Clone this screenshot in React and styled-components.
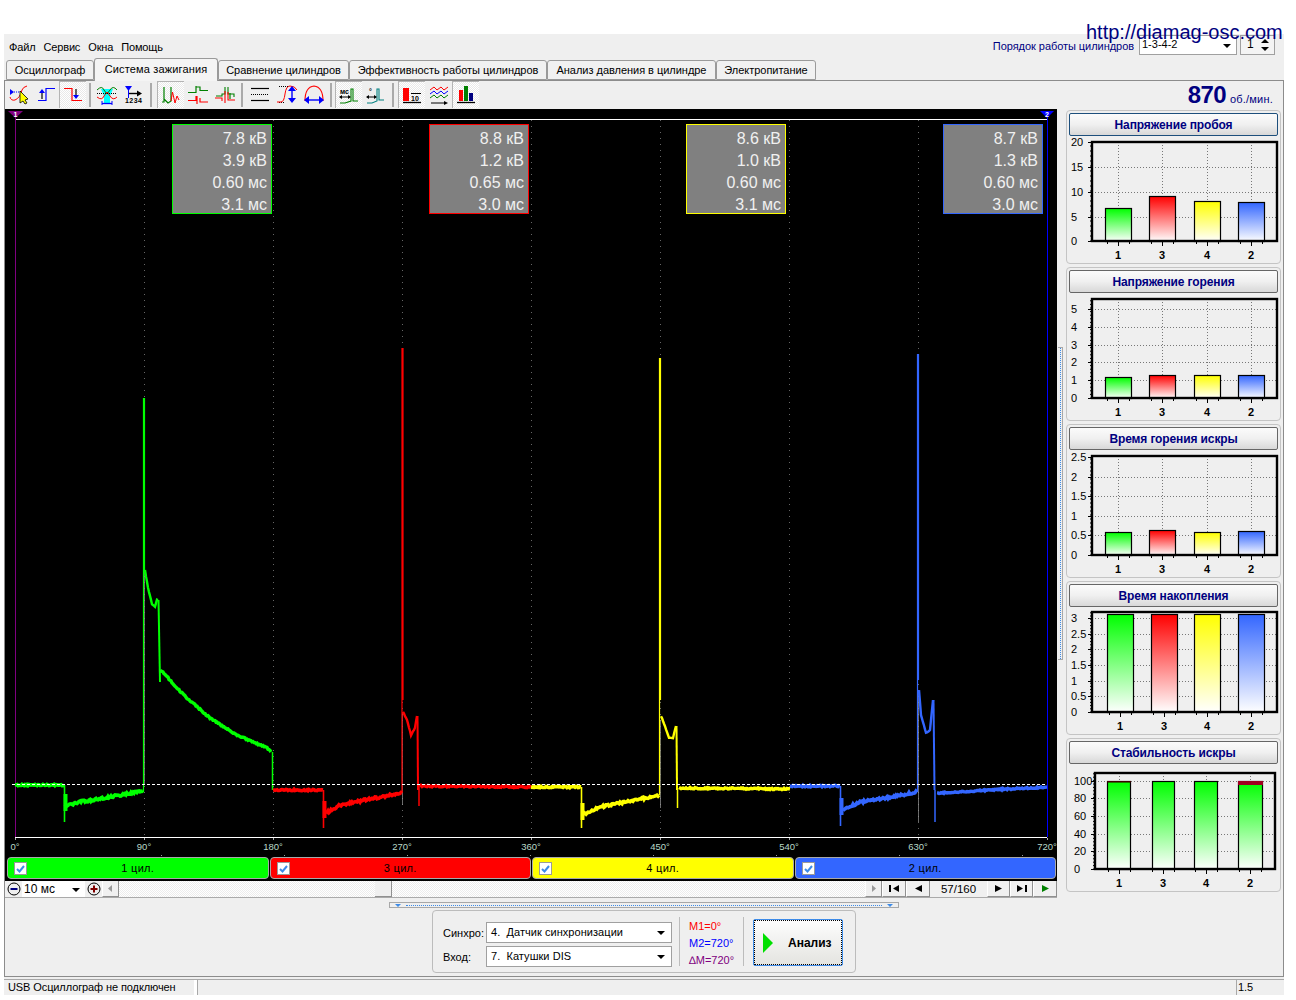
import React from 'react';
import styled, { createGlobalStyle } from 'styled-components';

const UI = '"Liberation Sans", Arial, sans-serif';

const Global = createGlobalStyle`
  html, body { margin: 0; padding: 0; background: #fff; }
  body { font-family: ${UI}; font-size: 11px; color: #000; }
`;

const Page = styled.div`
  position: relative; width: 1296px; height: 1000px; padding: 34px 0 0 4px; box-sizing: border-box; overflow: hidden;
`;
const Url = styled.div`
  position: absolute; z-index: 5; left: 1086px; top: 20px; font: 20px/24px ${UI}; color: #00007f; white-space: nowrap;
`;
const Window = styled.div`
  width: 1280px; height: 961px; background: #efefef; display: flex; flex-direction: column;
`;
const MenuRow = styled.div`
  height: 24px; display: flex; justify-content: space-between; padding: 1px 9px 0 5px; box-sizing: border-box;
`;
const Menu = styled.div`
  display: flex; gap: 8px; padding-top: 6px; line-height: 13px; letter-spacing: -.15px;
`;
const Order = styled.div`
  display: flex; align-items: flex-start;
`;
const OrderLabel = styled.span`
  color: #000080; margin: 5px 5px 0 0; line-height: 13px; letter-spacing: -.05px;
`;
const Combo = styled.div`
  position: relative; box-sizing: border-box; width: ${p => p.$w}px; height: ${p => p.$h}px;
  background: ${p => p.$bg || '#fff'}; border: ${p => p.$flat ? 0 : '1px solid #a0a0a0'}; padding: ${p => p.$pad || '0 0 0 3px'};
  line-height: ${p => p.$lh || 13}px; font-size: ${p => p.$fs || 11}px; letter-spacing: ${p => p.$ls || 0}px; white-space: pre;
  margin-left: ${p => p.$ml || 0}px; flex: none;
`;
const Caret = styled.i`
  position: absolute; right: ${p => p.$r}px; top: ${p => p.$t}px; width: 0; height: 0;
  border: 4px solid transparent; border-bottom: 0; border-top: 4px solid #000;
`;
const CaretUp = styled(Caret)`
  border-top: 0; border-bottom: 4px solid #000;
`;
const Tabs = styled.div`
  height: 22px; display: flex; align-items: flex-end; padding-left: 2px; position: relative; z-index: 1;
`;
const Tab = styled.div`
  box-sizing: border-box; height: ${p => p.$on ? 23 : 20}px; width: ${p => p.$w}px; margin-bottom: ${p => p.$on ? -1 : 0}px;
  border: 1px solid #9a9a9a; border-bottom: ${p => p.$on ? 0 : '1px solid #9a9a9a'}; border-radius: 3px 3px 0 0;
  background: ${p => p.$on ? '#f4f4f4' : '#f1f1f1'}; text-align: center; line-height: ${p => p.$on ? 20 : 19}px; letter-spacing: ${p => p.$on ? .15 : -.03}px; white-space: nowrap;
`;
const Frame = styled.div`
  flex: none; height: 897px; box-sizing: border-box; border: 1px solid #8c8c8c; display: flex; flex-direction: column;
`;
const Toolbar = styled.div`
  height: 28px; display: flex; align-items: stretch; position: relative;
`;
const ToolBtn = styled.div`
  width: 27px; height: 27px; display: flex; align-items: center; justify-content: center; flex: none; box-sizing: border-box;
  ${p => p.$on && `
    border-left: 1px solid #b4b4b4; border-top: 1px solid #b4b4b4; 
    background: conic-gradient(#fff 25%, #e9e9e9 0 50%, #fff 0 75%, #e9e9e9 0) 0 0 / 2px 2px;
  `}
`;
const Sep = styled.div`
  width: 2px; height: 24px; margin: 2px ${p => p.$r}px 0 3px; background: #aaa; flex: none;
`;
const Rpm = styled.div`
  margin-left: auto; padding: 0 10px 0 0; display: flex; align-items: baseline; line-height: 28px; color: #000080;
`;
const RpmValue = styled.b`
  font-size: 24px; letter-spacing: -.6px; margin-right: 4px;
`;
const RpmUnit = styled.span`
  font-size: 11px; letter-spacing: .2px;
`;
const Body = styled.div`
  display: flex; align-items: flex-start;
`;
const ScopeColumn = styled.div`
  width: 1052px; flex: none;
`;
const VSplit = styled.div`
  width: 5px; height: 313px; margin: 238px 0 0 1px; flex: none; box-sizing: border-box; border-right: 1px solid #a8a8a8; border-top: 1px solid #a8a8a8; border-bottom: 1px solid #a8a8a8;
  display: flex; justify-content: center;
`;
const VDots = styled.i`
  border-left: 1px dotted #3d8be8;
`;
const Canvas = styled.div`
  position: relative; height: 748px; background: #000;
`;
const Plot = styled.svg`
  display: block; font-family: ${UI};
`;
const ValueBox = styled.div`
  position: absolute; left: ${p => p.$x - 5}px; top: 15px; width: 100px; height: 90px; box-sizing: border-box;
  background: #808080; border: 1px solid ${p => p.$c}; color: #f0f0f0; font-size: 16px; line-height: 22px; text-align: right; padding: 3px 4px 0 0;
`;
const ColorRow = styled.div`
  height: 24px; background: #000; display: flex; gap: 1px; padding: 0 1px 0 2px; box-sizing: border-box;
`;
const ColorBtn = styled.div`
  flex: 1; height: 22px; box-sizing: border-box; background: ${p => p.$c}; border-radius: 4px; border: 1px solid #a8a8a8;
  display: flex; align-items: center; position: relative; justify-content: center; font-size: 11px; letter-spacing: .3px;
`;
const Check = styled.i`
  position: absolute; left: 6px; top: 4px; width: 13px; height: 13px; box-sizing: border-box; background: #fff; border: 1px solid #9a9a9a;
  display: flex; align-items: center; justify-content: center;
`;
const Controls = styled.div`
  height: 17px; box-sizing: border-box; border-bottom: 1px solid #aaa; display: flex; padding-left: 1px;
`;
const RoundBtn = styled.div`
  width: ${p => p.$w}px; height: 16px; flex: none; display: flex; align-items: center; justify-content: center;
`;
const SmallBtn = styled.div`
  width: ${p => p.$w}px; height: 16px; flex: none; box-sizing: border-box; display: flex; align-items: center; justify-content: center;
  background: #f0f0f0; border-right: 1px solid #909090; border-bottom: 1px solid #909090; border-left: 1px solid #fff;
`;
const Track = styled.div`
  position: relative; flex: 1; background: conic-gradient(#fff 25%, #ececec 0 50%, #fff 0 75%, #ececec 0) 0 0 / 2px 2px;
`;
const Thumb = styled.div`
  position: absolute; left: 256px; top: 0; width: 17px; height: 16px; box-sizing: border-box; background: #efefef;
  border-right: 1px solid #909090; border-bottom: 1px solid #909090;
`;
const Counter = styled.div`
  width: 57px; text-align: center; line-height: 16px; font-size: 11.500px; background: #f0f0f0; flex: none;
`;
const Side = styled.div`
  margin: 1px 0 0 3px; width: 215px; display: flex; flex-direction: column; gap: 3px;
`;
const Card = styled.div`
  box-sizing: border-box; height: 154px; border: 1px solid #c4c4c4; border-radius: 4px; padding: 2px;
`;
const CardHead = styled.div`
  box-sizing: border-box; height: 23px; border: 1px solid ${p => p.$c}; border-radius: 2px; background: linear-gradient(#fbfbfb, #f0f0f0 50%, #d8d8d8);
  color: #000080; font-weight: 700; font-size: 12px; line-height: 22px; letter-spacing: -.12px; text-align: center;
`;
const Splitter = styled.div`
  margin: 4px auto 0; width: 510px; height: 6px; box-sizing: border-box; border: 1px solid #a8a8a8; display: flex; align-items: center; justify-content: space-between; padding: 0 5px;
`;
const Dots = styled.i`
  flex: 1; margin: 0 5px; border-top: 1px dotted #3d8be8;
`;
const Tri = styled.i`
  width: 0; height: 0; border: 3px solid transparent; border-bottom: 0; border-top: 3px solid #3d8be8;
`;
const Panel = styled.div`
  margin: 2px 0 0 427px; width: 424px; height: 63px; box-sizing: border-box; border: 1px solid #bcbcbc; border-radius: 4px; display: flex; padding: 5px 0 0 10px;
`;
const Fields = styled.div`
  width: 229px; padding-top: 6px; display: flex; flex-direction: column; gap: 3px; flex: none;
`;
const Field = styled.div`
  display: flex; align-items: center; height: 21px;
`;
const FieldLabel = styled.span`
  width: 43px; flex: none;
`;
const Divider = styled.div`
  width: 1px; height: 49px; background: #bcbcbc; flex: none; margin: 1px 0 0 ${p => p.$l}px;
`;
const Marks = styled.div`
  width: 53px; margin-left: 9px; padding-top: 4px; flex: none; display: flex; flex-direction: column; gap: 4px; font-size: 11px; line-height: 13px;
`;
const Mark = styled.div`
  color: ${p => p.$c}; white-space: nowrap;
`;
const RunBtn = styled.div`
  box-sizing: border-box; width: 90px; height: 47px; margin: 3px 0 0 9px; border: 1px solid #3d8be8; border-radius: 2px; background: linear-gradient(#fdfdfd, #e4e4e0);
  outline: 1px dotted #000; outline-offset: -2px; display: flex; align-items: center; padding-left: 9px; gap: 15px; font-weight: 700; font-size: 12px;
`;
const Status = styled.div`
  margin-top: 2px; height: 16px; border-top: 1px solid #a8a8a8; display: flex; box-sizing: border-box; font-size: 11px; line-height: 15px; letter-spacing: -.1px;
`;
const StatusCell = styled.div`
  box-sizing: border-box; width: ${p => p.$w ? p.$w + 'px' : 'auto'}; flex: ${p => p.$w ? 'none' : 1}; padding-left: ${p => p.$p}px;
  border-left: ${p => p.$sep ? '1px solid #a8a8a8' : 0}; ${p => p.$gap && 'border-right: 3px solid #fff;'} white-space: nowrap;
`;

/* ---------- toolbar icons: each viewBox is 24×24, 1 unit = 1 px ---------- */
const P = ({ d, c = '#000', w = 1, dash }) => <path d={d} fill="none" stroke={c} strokeWidth={w} strokeDasharray={dash} />;
const F = ({ d, c }) => <path d={d} fill={c} />;
const R = '#f00', B = '#00f', G = '#008000', N = '#000';
const icons = {
  cursor: <><F d="M3 6 L7 9 L3 12Z" c={B} /><P d="M7 9H14" c={B} dash="1 1" /><P d="M3 14 Q4 18 8 17 Q13 15 15 7 Q16 4 20 3" c={R} /><path d="M13 8 L13 20 L16 18 L18 21 L20 20 L18 17 L21 16Z" fill="#ff0" stroke="#000" strokeWidth=".8" /></>,
  up: <><P d="M4 17.5H12V5.5H21" c={B} w={1.2} /><P d="M8 16V9" c={N} w={1.2} /><F d="M5 10 L8 6 L11 10Z" c={B} /></>,
  down: <><P d="M3 5.5H11V17.5H21" c={R} w={1.2} /><P d="M15 6V13" c={N} w={1.2} /><F d="M12 12 L15 16 L18 12Z" c={B} /></>,
  wave: <><path d="M6 6 H18 L15 13 L15 20 H9 L9 13Z" fill="#0ff" /><P d="M2 7 Q7 2 9 7 L12 11 L15 7 Q18 2 22 7" c={G} /><P d="M2 14 Q7 18 9 13 L12 9 L15 13 Q18 18 22 14" c={R} /><P d="M2 10.500H22" c={N} dash="1 1" /><P d="M7 20.500H17" c={B} w={1.3} /><P d="M7 18V22M17 18V22" c={B} /></>,
  order: <><F d="M3 3H10L6.500 8Z" c={B} /><P d="M6.500 7V15" c={B} /><P d="M7 10.500H18" c={N} w={1.4} /><F d="M15 7.500 L20 10.500 L15 13.500Z" c={N} /><text x="3" y="20" fontSize="7" fontWeight="700" fontFamily={UI} textLength="17">1234</text></>,
  h1: <><P d="M3 19H5V4V16L9 20L12 18V4V16" c={G} w={1.2} /><P d="M12 18L13.500 9L16 20L18 13L20 17" c={R} w={1} /></>,
  h2: <><P d="M2 9.500H10V3V9.500 M10 4H14V7.500H22" c={G} w={1.2} /><P d="M2 17.500H10V13 M11 13V21 M14 15V19H22" c={R} w={1.2} /></>,
  h3: <><P d="M3 13H9V11H12V4 M15 4V11H21 V14" c={G} w={1.1} /><P d="M2 15H9V18 M12 8V20 M15 9V17H22" c={R} w={1.1} /><P d="M17 10V16" c={G} w={1.2} /></>,
  lines: <><P d="M3 5.500H21" c={N} w={1.2} /><P d="M3 11.500H21" c={N} dash="1 1" /><P d="M3 17.500H21" c={N} w={1.2} /></>,
  rise: <><P d="M4 3.500H14M4 19.500H10" c={N} dash="1 1" /><P d="M2 19H6 Q9 19 10 11 Q11 3 15 3 Q20 3 22 7" c={R} /><P d="M17 5V18" c={B} w={1.4} /><F d="M13 8 L17 3 L21 8Z M13 15 L17 20 L21 15Z" c={B} /></>,
  dome: <><P d="M3 18 Q3 4 12 3 Q21 4 21 18" c={R} w={1.1} /><P d="M4 17H20" c={B} w={1.4} /><F d="M2 17 L7 13 V21Z M22 17 L17 13 V21Z" c={B} /></>,
  ms: <><P d="M3 20H8L14 18V6H16V18H21" c={G} w={1.1} /><text x="3" y="11" fontSize="7" fontWeight="700" fontFamily={UI}>мс</text><P d="M3 14H13" c={N} /><F d="M2 14 L5 12 V16Z M14 14 L11 12V16Z" c={N} /></>,
  deg: <><P d="M3 20H8L13 18V6H15V17H20" c="#008080" w={1.1} /><text x="5" y="11" fontSize="7" fontWeight="700" fontFamily={UI}>°</text><P d="M3 14H12" c={N} /><F d="M2 14 L5 12V16Z M13 14 L10 12V16Z" c={N} /></>,
  red10: <><rect x="3" y="5" width="6" height="13" fill={R} /><P d="M11 10.500H21" c={N} /><P d="M3 19.500H21" c={N} w={1.3} /><text x="11" y="18" fontSize="7" fontWeight="700" fontFamily={UI}>10</text></>,
  waves: <><P d="M3 7L7 4L10 7L14 4L17 7L21 4" c={R} /><P d="M3 11L7 8L10 11L14 8L17 11L21 8" c={B} /><P d="M3 15L7 12L10 15L14 12L17 15L21 12" c={G} /><P d="M4 20H18" c={N} /><F d="M17 18L21 20L17 22Z" c={N} /></>,
  bars: <><rect x="5" y="7" width="4" height="11" fill={R} /><rect x="10" y="3" width="4" height="15" fill={G} /><rect x="15" y="10" width="4" height="8" fill="#000080" /><P d="M3 19.500H21" c={N} w={1.3} /></>,
};
const Icon = ({ name }) => <svg width="24" height="24" viewBox="0 0 24 24">{icons[name]}</svg>;

/* ---------- oscillogram ---------- */
const noise = (i, seed) => {
  const v = Math.sin(i * 12.9898 + seed * 78.233) * 43758.5453;
  return v - Math.floor(v) - 0.5;
};
const trace = (pts, amp, seed) => {
  const out = [];
  for (let k = 0; k < pts.length - 1; k++) {
    const [x0, y0] = pts[k], [x1, y1] = pts[k + 1];
    const n = Math.max(1, Math.round(x1 - x0));
    for (let i = 0; i < n; i++) {
      const t = i / n;
      out.push(`${(x0 + (x1 - x0) * t).toFixed(1)} ${(y0 + (y1 - y0) * t + noise(x0 + i, seed) * amp).toFixed(1)}`);
    }
  }
  out.push(pts[pts.length - 1].join(' '));
  return 'M' + out.join('L');
};
const traces = [
  { c: '#00ff00', seed: 1,
    base: [[15, 785], [64, 785]], dipX: 64.500,
    dip: 'M64.500 785V822', rec: [[65, 806], [80, 802], [110, 797], [143, 791]],
    spike: 'M143.500 792V398M144.500 398V570', fall: [[145, 570], [148, 588], [152, 604], [155, 607], [157, 600], [158, 600]],
    drop: 'M158.500 600L160 682', tail: [[160, 670], [163, 672], [175, 686], [187, 698], [210, 718], [237, 735], [267, 748], [271, 752]],
    end: 'M272.500 752V790' },
  { c: '#ff0000', seed: 2,
    base: [[273, 790], [323, 790]], dipX: 323.500,
    dip: 'M323.500 790V828', rec: [[326, 813], [340, 805], [370, 799], [402, 793]],
    spike: 'M402 793V348M403 348V700', fall: [[403, 712], [407, 720], [411, 735], [415, 728], [417, 716]],
    drop: 'M417.500 716L418 790', tail: [[420, 786], [531, 787]], end: 'M419 785V806' },
  { c: '#ffff00', seed: 3,
    base: [[531, 787], [581, 787]], dipX: 581.500,
    dip: 'M581.500 787V828', rec: [[584, 815], [600, 807], [630, 801], [659, 795]],
    spike: 'M659.500 795V358M660.500 358V700', fall: [[661, 716], [665, 726], [669, 738], [673, 738], [676, 726]],
    drop: 'M676.500 726L677 790', tail: [[679, 788], [790, 789]], end: 'M677.500 788V808' },
  { c: '#3366ff', seed: 4,
    base: [[790, 786], [840, 786]], dipX: 840.500,
    dip: 'M840.500 786V826', rec: [[843, 810], [860, 802], [890, 797], [917, 792]],
    spike: 'M917.500 792V354M918.500 354V680', fall: [[919, 690], [921, 715], [926, 733], [930, 730], [933, 700]],
    drop: 'M933.500 700L934.500 790', tail: [[937, 793], [990, 790], [1047, 787]], end: 'M935 790V822' },
];
const degrees = [0, 90, 180, 270, 360, 450, 540, 630, 720];
const lowDots = [161, 284, 407, 530, 653, 776, 899, 1022];

const Oscillogram = () => (
  <Plot width="1052" height="748" viewBox="5 109 1052 748">
    {degrees.slice(1, -1).map(d => {
      const x = 15 + d * 129 / 90;
      return <line key={d} x1={x + .5} x2={x + .5} y1="120" y2="837" stroke="#666" strokeDasharray="1 5" />;
    })}
    <path d="M144.500 570V785M402.500 712V805M660.500 720V808M918.500 690V822" stroke="#999" strokeWidth=".7" fill="none" />
    <line x1="15" x2="1047" y1="119.500" y2="119.500" stroke="#fff" />
    <line x1="15" x2="1047" y1="837.500" y2="837.500" stroke="#fff" />
    <line x1="15.500" x2="15.500" y1="112" y2="837" stroke="#800080" />
    <line x1="1047.500" x2="1047.500" y1="112" y2="837" stroke="#0000ff" />
    {traces.map(t => (
      <g key={t.c} fill="none" stroke={t.c}>
        <path d={trace(t.base, 1.400, t.seed)} strokeWidth="3.600" />
        <path d={t.dip} strokeWidth="1.600" />
        <path d={`M${t.dipX + 1} ${t.rec[0][1] - 12}V${t.rec[0][1] + 5}`} strokeWidth="4" />
        <path d={trace(t.rec, 2.400, t.seed + 5)} strokeWidth="3.600" />
        <path d={t.spike} strokeWidth="1.200" />
        <path d={trace(t.fall, .8, t.seed + 9)} strokeWidth="2.400" />
        <path d={t.drop} strokeWidth="2" />
        <path d={trace(t.tail, 1.400, t.seed + 12)} strokeWidth="3.400" />
        <path d={t.end} strokeWidth="1.500" />
      </g>
    ))}
    <line x1="12" x2="1047" y1="784.500" y2="784.500" stroke="#fff" strokeDasharray="3 2" />
    <path d="M8 111H23L15.500 118Z" fill="#800080" />
    <text x="15.500" y="117" fontSize="7" fontWeight="700" fill="#fff" textAnchor="middle">1</text>
    <path d="M1040 111H1054L1047 118Z" fill="#0000ff" />
    <text x="1047" y="117" fontSize="7" fontWeight="700" fill="#fff" textAnchor="middle">2</text>
    {degrees.map(d => {
      const x = 15 + d * 129 / 90;
      return <g key={d}>
        <line x1={x + .5} x2={x + .5} y1="838" y2="840" stroke="#aaa" />
        <text x={d === 720 ? 1047 : x} y="850" fontSize="9.500" fill="#b9d8c8" textAnchor="middle">{d}°</text>
      </g>;
    })}
    {lowDots.map(x => <rect key={x} x={x} y="855" width="1" height="1" fill="#999" />)}
  </Plot>
);

/* ---------- side charts ---------- */
const barFills = [['gG', '#00ff00'], ['gR', '#ff0000'], ['gY', '#ffff00'], ['gB', '#3366ff']];
const Chart = ({ y0, box, yTicks, bars, labels, caps, allGreen, startX = 1071, minor = 5 }) => {
  const [l, t, r, b] = box;
  const step = (yTicks[1][1] - yTicks[0][1]) / minor;
  const minorTicks = [];
  for (let y = b; y >= t; y -= step) minorTicks.push(y);
  const xs = labels.map(v => v[1]);
  return (
    <Plot width="210" height="124" viewBox={`1069 ${y0} 210 124`}>
      {yTicks.map(([label, y]) => (
        <g key={label}>
          <text x={startX} y={y + 4} fontSize="11">{label}</text>
          {y > t + 2 && y < b && <line x1={l} x2={r} y1={y + .5} y2={y + .5} stroke="#777" strokeDasharray="1 2" />}
          <line x1={l - 4} x2={l} y1={y + .5} y2={y + .5} stroke="#000" />
        </g>
      ))}
      {minorTicks.map(y => <line key={y} x1={l - 2} x2={l} y1={y} y2={y} stroke="#000" />)}
      {xs.map(x => <line key={x} x1={x + .5} x2={x + .5} y1={t} y2={b} stroke="#777" strokeDasharray="1 2" />)}
      {bars.map(([x0, x1, top], i) => (
        <g key={x0}>
          <rect x={x0 + .5} y={top + .5} width={x1 - x0 - 1} height={b - top} fill={`url(#${allGreen ? 'gG' : barFills[i][0]})`} stroke="#000" strokeWidth="1.200" />
          {caps && caps[i] > 0 && <rect x={x0} y={top} width={x1 - x0} height={caps[i]} fill={i ? '#a00020' : '#400000'} />}
        </g>
      ))}
      <rect x={l} y={t} width={r - l} height={b - t} fill="none" stroke="#000" strokeWidth="2.400" />
      {xs.map(x => <line key={x} x1={x + .5} x2={x + .5} y1={b} y2={b + 5} stroke="#000" />)}
      {xs.flatMap(x => [x - 11, x + 11]).map(x => <line key={x} x1={x + .5} x2={x + .5} y1={b} y2={b + 3} stroke="#000" />)}
      {labels.map(([label, x]) => <text key={x} x={x} y={b + 18} fontSize="11" fontWeight="700" textAnchor="middle">{label}</text>)}
    </Plot>
  );
};
const xNums = ['1', '3', '4', '2'];
const charts = [
  { title: 'Напряжение пробоя', c: '#1d4f7c', y0: 136, box: [1092, 142, 1277, 241],
    yTicks: [['20', 142], ['15', 167], ['10', 192], ['5', 217], ['0', 241]],
    bars: [[1105, 1132, 208], [1149, 1176, 196], [1194, 1221, 201], [1238, 1265, 202]],
    labels: xNums.map((n, i) => [n, [1118, 1162, 1207, 1251][i]]) },
  { title: 'Напряжение горения', c: '#666', y0: 293, box: [1092, 299, 1277, 398],
    yTicks: [['5', 309], ['4', 327], ['3', 345], ['2', 362], ['1', 380], ['0', 398]],
    bars: [[1105, 1132, 377], [1149, 1176, 375], [1194, 1221, 375], [1238, 1265, 375]],
    labels: xNums.map((n, i) => [n, [1118, 1162, 1207, 1251][i]]) },
  { title: 'Время горения искры', c: '#666', y0: 450, box: [1092, 456, 1277, 555],
    yTicks: [['2.5', 457], ['2', 477], ['1.5', 496], ['1', 516], ['0.5', 535], ['0', 555]],
    bars: [[1105, 1132, 532], [1149, 1176, 530], [1194, 1221, 532], [1238, 1265, 531]],
    labels: xNums.map((n, i) => [n, [1118, 1162, 1207, 1251][i]]) },
  { title: 'Время накопления', c: '#666', y0: 607, box: [1092, 612, 1277, 712],
    yTicks: [['3', 618], ['2.5', 634], ['2', 649], ['1.5', 665], ['1', 681], ['0.5', 696], ['0', 712]],
    bars: [[1107, 1134, 614], [1151, 1178, 614], [1194, 1221, 614], [1238, 1265, 614]],
    labels: xNums.map((n, i) => [n, [1120, 1164, 1207, 1251][i]]) },
  { title: 'Стабильность искры', c: '#666', y0: 764, box: [1095, 773, 1275, 869], caps: [1.5, 0, 0, 4], allGreen: true,
    yTicks: [['100', 781], ['80', 798], ['60', 816], ['40', 834], ['20', 851], ['0', 869]], startX: 1074,
    bars: [[1107, 1131, 781], [1152, 1175, 781], [1194, 1218, 781], [1238, 1263, 781]],
    labels: xNums.map((n, i) => [n, [1119, 1163, 1206, 1250][i]]) },
];

const TriBtn = ({ d, c = '#000', bar }) => (
  <svg width="13" height="9" viewBox="0 0 13 9">
    <path d={d} fill={c} />
    {bar && <path d={bar} fill={c} />}
  </svg>
);
const CheckMark = () => (
  <svg width="9" height="8" viewBox="0 0 9 8"><path d="M1 4 L3.500 6.500 L8 1" fill="none" stroke="#3d8be8" strokeWidth="2" /></svg>
);

const toolbar = [
  ['cursor'], ['up'], ['down', 1], { r: 2 },
  ['wave'], ['order'], { r: 5 },
  ['h1', 1], ['h2'], ['h3'], { r: 3 },
  ['lines'], ['rise'], ['dome'], { r: 3 },
  ['ms', 1], ['deg'], { r: 4 },
  ['red10', 1], ['waves'], ['bars', 1],
];
const tabs = [
  ['Осциллограф', 88], ['Система зажигания', 124, 1], ['Сравнение цилиндров', 131], ['Эффективность работы цилиндров', 198], ['Анализ давления в цилиндре', 169], ['Электропитание', 100],
];
const values = [
  ['#00ff00', 172, ['7.8 кВ', '3.9 кВ', '0.60 мс', '3.1 мс']],
  ['#ff0000', 429, ['8.8 кВ', '1.2 кВ', '0.65 мс', '3.0 мс']],
  ['#ffff00', 686, ['8.6 кВ', '1.0 кВ', '0.60 мс', '3.1 мс']],
  ['#3366ff', 943, ['8.7 кВ', '1.3 кВ', '0.60 мс', '3.0 мс']],
];
const cyl = [['#00ff00', '1 цил.'], ['#ff0000', '3 цил.'], ['#ffff00', '4 цил.'], ['#3366ff', '2 цил.']];

export default function App() {
  return (
    <Page>
      <Global />
      <svg width="0" height="0" style={{ position: 'absolute' }}>
        <defs>
          {barFills.map(([id, c]) => (
            <linearGradient key={id} id={id} x1="0" y1="0" x2="0" y2="1">
              <stop offset="0" stopColor={c} /><stop offset="1" stopColor="#fff" />
            </linearGradient>
          ))}
        </defs>
      </svg>
      <Url>http://diamag-osc.com</Url>
      <Window>
        <MenuRow>
          <Menu>
            <span>Файл</span><span>Сервис</span><span>Окна</span><span>Помощь</span>
          </Menu>
          <Order>
            <OrderLabel>Порядок работы цилиндров</OrderLabel>
            <Combo $w={98} $h={20} $lh={16} $pad="0 0 0 2px">1-3-4-2<Caret $r={5} $t={8} /></Combo>
            <Combo $w={35} $h={20} $ml={3} $lh={16} $bg="#f4f4f4" $pad="0 0 0 6px" $fs={12}>1<CaretUp $r={5} $t={3} /><Caret $r={5} $t={11} /></Combo>
          </Order>
        </MenuRow>
        <Tabs>
          {tabs.map(([t, w, on]) => <Tab key={t} $w={w} $on={on}>{t}</Tab>)}
        </Tabs>
        <Frame>
          <Toolbar>
            {toolbar.map((it, i) => it.r !== undefined
              ? <Sep key={i} $r={it.r} />
              : <ToolBtn key={i} $on={it[1]}><Icon name={it[0]} /></ToolBtn>)}
            <Rpm><RpmValue>870</RpmValue><RpmUnit>об./мин.</RpmUnit></Rpm>
          </Toolbar>
          <Body>
            <ScopeColumn>
              <Canvas>
                <Oscillogram />
                {values.map(([c, x, rows]) => (
                  <ValueBox key={c} $c={c} $x={x}>{rows.map((r, i) => <div key={i}>{r}</div>)}</ValueBox>
                ))}
              </Canvas>
              <ColorRow>
                {cyl.map(([c, t]) => (
                  <ColorBtn key={t} $c={c}><Check><CheckMark /></Check>{t}</ColorBtn>
                ))}
              </ColorRow>
              <Controls>
                <RoundBtn $w={16}>
                  <svg width="14" height="14" viewBox="0 0 14 14"><circle cx="7" cy="7" r="6" fill="#eee" stroke="#000" /><path d="M3.500 6h7v2h-7z" fill="#000080" /></svg>
                </RoundBtn>
                <Combo $w={63} $h={16} $fs={12} $flat $lh={16} $pad="0 0 0 2px">10 мс<Caret $r={5} $t={7} /></Combo>
                <RoundBtn $w={17}>
                  <svg width="14" height="14" viewBox="0 0 14 14"><circle cx="7" cy="7" r="6" fill="#eee" stroke="#000" /><path d="M3.500 6h7v2h-7zM6 3.500h2v7h-2z" fill="#800000" /></svg>
                </RoundBtn>
                <SmallBtn $w={17}><TriBtn c="#999" d="M8 1L4 4.500L8 8Z" /></SmallBtn>
                <Track><Thumb /></Track>
                <SmallBtn $w={17}><TriBtn c="#999" d="M5 1L9 4.500L5 8Z" /></SmallBtn>
                <SmallBtn $w={24}><TriBtn d="M11 1L5 4.500L11 8Z" bar="M1 1h2v7H1z" /></SmallBtn>
                <SmallBtn $w={24}><TriBtn d="M10 1L3 4.500L10 8Z" /></SmallBtn>
                <Counter>57/160</Counter>
                <SmallBtn $w={23}><TriBtn d="M3 1L10 4.500L3 8Z" /></SmallBtn>
                <SmallBtn $w={23}><TriBtn d="M2 1L8 4.500L2 8Z" bar="M10 1h2v7h-2z" /></SmallBtn>
                <SmallBtn $w={24}><TriBtn c="#008000" d="M3 1L10 4.500L3 8Z" /></SmallBtn>
              </Controls>
            </ScopeColumn>
            <VSplit><VDots /></VSplit>
            <Side>
              {charts.map(ch => (
                <Card key={ch.title}>
                  <CardHead $c={ch.c}>{ch.title}</CardHead>
                  <Chart {...ch} />
                </Card>
              ))}
            </Side>
          </Body>
          <Splitter><Tri /><Dots /><Tri /></Splitter>
          <Panel>
            <Fields>
              <Field>
                <FieldLabel>Синхро:</FieldLabel>
                <Combo $w={186} $h={21} $lh={18} $pad="0 0 0 4px" $ls={.05}>4.  Датчик синхронизации<Caret $r={6} $t={8} /></Combo>
              </Field>
              <Field>
                <FieldLabel>Вход:</FieldLabel>
                <Combo $w={186} $h={21} $lh={18} $pad="0 0 0 4px" $ls={.05}>7.  Катушки DIS<Caret $r={6} $t={8} /></Combo>
              </Field>
            </Fields>
            <Divider $l={7} />
            <Marks>
              <Mark $c="#ff0000">M1=0°</Mark>
              <Mark $c="#0000ff">M2=720°</Mark>
              <Mark $c="#800080">∆M=720°</Mark>
            </Marks>
            <Divider $l={1} />
            <RunBtn>
              <svg width="10" height="20" viewBox="0 0 10 20"><path d="M0 0L10 10L0 20Z" fill="#00e000" /></svg>
              <span>Анализ</span>
            </RunBtn>
          </Panel>
        </Frame>
        <Status>
          <StatusCell $w={193} $p={4} $gap>USB Осциллограф не подключен</StatusCell>
          <StatusCell $sep />
          <StatusCell $w={48} $p={1} $sep>1.5</StatusCell>
        </Status>
      </Window>
    </Page>
  );
}
